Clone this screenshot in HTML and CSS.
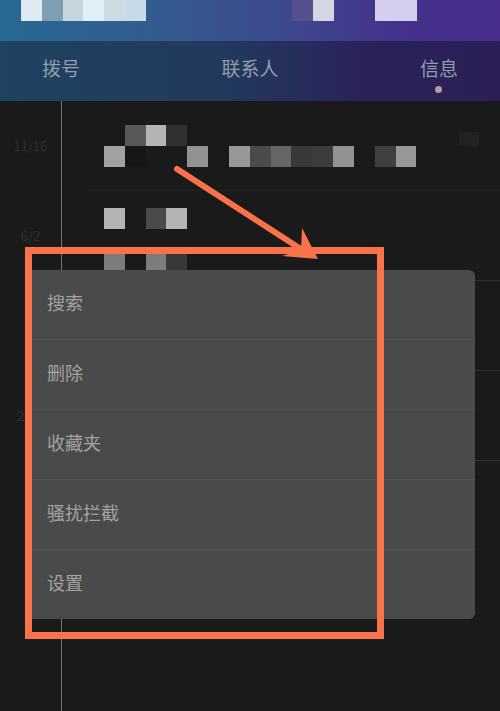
FILE: index.html
```html
<!DOCTYPE html>
<html>
<head>
    <title>信息</title>
    <link rel="stylesheet" href="styles.css">
</head>
<body>
    <div class="page">
        <div class="top-bar">
            <div class="cell top1"></div>
            <div class="cell top2"></div>
            <div class="cell top3"></div>
            <div class="cell top4"></div>
            <div class="cell top5"></div>
            <div class="cell top6"></div>
            <div class="cell top7 top-gap-a"></div>
            <div class="cell top8"></div>
            <div class="cell top9 top-gap-b"></div>
            <div class="cell top9"></div>
        </div>

        <nav class="tabs">
            <div class="tab">拨号</div>
            <div class="tab">联系人</div>
            <div class="tab">信息<span class="tab-dot"></span></div>
        </nav>

        <div class="log">
            <div class="entry entry-first">
                <div class="entry-date">11/16</div>
                <div class="entry-body">
                    <div class="cell-row">
                        <div class="cell"></div>
                        <div class="cell g-55"></div>
                        <div class="cell g-b0"></div>
                        <div class="cell g-30"></div>
                    </div>
                    <div class="cell-row">
                        <div class="cell g-a0"></div>
                        <div class="cell g-14"></div>
                        <div class="cell"></div>
                        <div class="cell"></div>
                        <div class="cell g-90"></div>
                        <div class="cell"></div>
                        <div class="cell g-96"></div>
                        <div class="cell g-4a"></div>
                        <div class="cell g-66"></div>
                        <div class="cell g-38"></div>
                        <div class="cell g-3c"></div>
                        <div class="cell g-90"></div>
                        <div class="cell"></div>
                        <div class="cell g-40"></div>
                        <div class="cell g-96"></div>
                    </div>
                    <div class="faint-mark"></div>
                </div>
            </div>

            <div class="entry entry-second">
                <div class="entry-date">6/2</div>
                <div class="entry-body">
                    <div class="cell-row">
                        <div class="cell g-b0"></div>
                        <div class="cell"></div>
                        <div class="cell g-4a"></div>
                        <div class="cell g-b0"></div>
                    </div>
                    <div class="cell-row"></div>
                    <div class="cell-row">
                        <div class="cell g-78"></div>
                        <div class="cell"></div>
                        <div class="cell g-78"></div>
                        <div class="cell g-38"></div>
                    </div>
                </div>
            </div>

            <div class="entry">
                <div class="entry-date"></div>
                <div class="entry-body"></div>
            </div>

            <div class="entry">
                <div class="entry-date">2/14</div>
                <div class="entry-body"></div>
            </div>

            <div class="entry entry-last">
                <div class="entry-date"></div>
                <div class="entry-body"></div>
            </div>
        </div>

        <div class="menu">
            <div class="menu-item">搜索</div>
            <div class="menu-item">删除</div>
            <div class="menu-item">收藏夹</div>
            <div class="menu-item">骚扰拦截</div>
            <div class="menu-item">设置</div>
        </div>

        <div class="mark-box"></div>
        <svg class="mark-arrow" width="500" height="711" viewBox="0 0 500 711">
            <line x1="177" y1="169" x2="304" y2="251" stroke="#f9734a" stroke-width="6" stroke-linecap="round"/>
            <polygon points="318,259 282,256 301,250 302,228" fill="#f9734a"/>
        </svg>
    </div>
</body>
</html>
```

FILE: styles.css
```css
body {
    margin: 0;
    background-color: #1a1a1a;
    font-family: "Noto Sans CJK SC", "Liberation Sans", sans-serif;
}

.page {
    position: relative;
    width: 500px;
    height: 711px;
    overflow: hidden;
    display: flex;
    flex-direction: column;
}

/* blurred-out pixel blocks */
.cell {
    width: 20.83px;
    height: 20.83px;
    flex-shrink: 0;
}

.cell-row {
    display: flex;
    height: 20.83px;
}

.g-14 { background-color: #161616; }
.g-30 { background-color: #303030; }
.g-38 { background-color: #383838; }
.g-3c { background-color: #3c3c3c; }
.g-40 { background-color: #404040; }
.g-4a { background-color: #4a4a4a; }
.g-55 { background-color: #585858; }
.g-66 { background-color: #666666; }
.g-78 { background-color: #7c7c7c; }
.g-90 { background-color: #929292; }
.g-96 { background-color: #989898; }
.g-a0 { background-color: #a2a2a2; }
.g-b0 { background-color: #b4b4b4; }

.top-bar {
    display: flex;
    height: 41px;
    padding-left: 21px;
    background: linear-gradient(90deg, #276a94 0%, #35598f 35%, #3d4a8f 55%, #44328c 80%, #482d8c 100%);
}

.top1 { background-color: #dfeaf0; }
.top2 { background-color: #7f9eb3; }
.top3 { background-color: #c5d6de; }
.top4 { background-color: #dff0f8; }
.top5 { background-color: #cddce2; }
.top6 { background-color: #c8dae8; }
.top7 { background-color: #56508f; }
.top8 { background-color: #d4d6e2; }
.top9 { background-color: #d4cfee; }

.top-gap-a { margin-left: 146px; }
.top-gap-b { margin-left: 41.6px; }

.tabs {
    display: flex;
    justify-content: space-between;
    align-items: flex-start;
    height: 60px;
    box-sizing: border-box;
    padding: 16px 42px 0 42px;
    background: linear-gradient(90deg, #1f4360 0%, #22395e 45%, #2a2159 75%, #2c1f57 100%);
}

.tab {
    display: flex;
    flex-direction: column;
    align-items: center;
    font-size: 19px;
    line-height: 22px;
    color: #919fab;
}

.tab-dot {
    width: 7px;
    height: 7px;
    margin-top: 7px;
    border-radius: 50%;
    background-color: #b5a194;
}

.log {
    flex: 1;
    display: flex;
    flex-direction: column;
}

.entry {
    display: flex;
    height: 90px;
    flex-shrink: 0;
}

.entry-last { flex: 1; }

.entry-date {
    width: 62px;
    flex-shrink: 0;
    box-sizing: border-box;
    padding-top: 37px;
    border-right: 1px solid #77776e;
    font-size: 13px;
    line-height: 16px;
    text-align: center;
    color: #2f2f2f;
}

.entry-body {
    flex: 1;
    position: relative;
    margin-left: 26px;
    padding-left: 16px;
    border-bottom: 1px solid #303030;
}

.entry-first .entry-body {
    padding-top: 24px;
    border-bottom-color: #242424;
}

.entry-second .entry-body { padding-top: 17px; }
.entry-last .entry-body { border-bottom: none; }

.faint-mark {
    position: absolute;
    top: 31px;
    right: 21px;
    width: 20px;
    height: 14px;
    background-color: #222222;
}

.menu {
    position: absolute;
    left: 26px;
    top: 270px;
    width: 449px;
    height: 349px;
    display: flex;
    flex-direction: column;
    border-radius: 6px;
    background-color: #4a4a4a;
}

.menu-item {
    flex: 1;
    display: flex;
    align-items: center;
    padding: 0 0 6px 21px;
    border-bottom: 1px solid #525252;
    font-size: 18px;
    color: #a3a3a3;
}

.menu-item:last-child {
    border-bottom: none;
}

.mark-box {
    position: absolute;
    left: 25px;
    top: 247px;
    width: 345px;
    height: 378px;
    border: 7px solid #f9734a;
}

.mark-arrow {
    position: absolute;
    left: 0;
    top: 0;
}
```
